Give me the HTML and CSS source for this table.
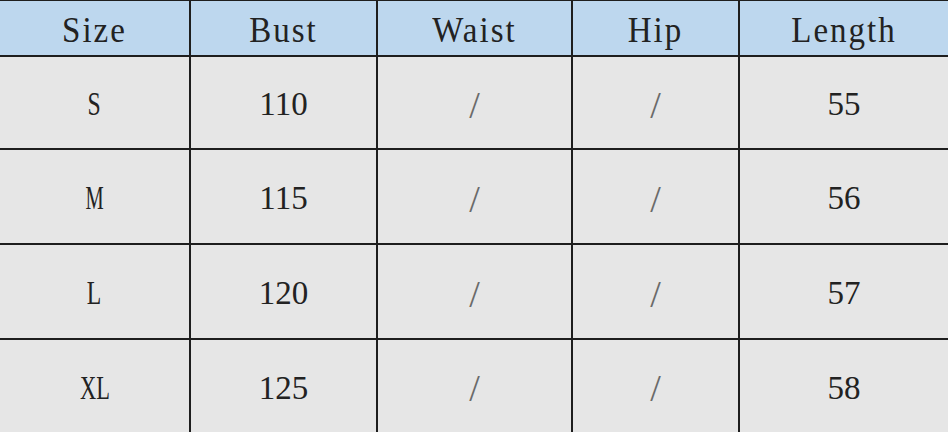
FILE: index.html
```html
<!DOCTYPE html>
<html>
<head>
<meta charset="utf-8">
<link rel="stylesheet" href="styles.css">
</head>
<body>
<div class="chart">
  <div class="cell head"><span class="t">Size</span></div>
  <div class="cell head"><span class="t">Bust</span></div>
  <div class="cell head"><span class="t">Waist</span></div>
  <div class="cell head"><span class="t">Hip</span></div>
  <div class="cell head"><span class="t">Length</span></div>

  <div class="cell"><span class="t narrow">S</span></div>
  <div class="cell"><span class="t">110</span></div>
  <div class="cell"><span class="t slash">/</span></div>
  <div class="cell"><span class="t slash">/</span></div>
  <div class="cell"><span class="t">55</span></div>

  <div class="cell"><span class="t narrow m">M</span></div>
  <div class="cell"><span class="t">115</span></div>
  <div class="cell"><span class="t slash">/</span></div>
  <div class="cell"><span class="t slash">/</span></div>
  <div class="cell"><span class="t">56</span></div>

  <div class="cell"><span class="t narrow">L</span></div>
  <div class="cell"><span class="t">120</span></div>
  <div class="cell"><span class="t slash">/</span></div>
  <div class="cell"><span class="t slash">/</span></div>
  <div class="cell"><span class="t">57</span></div>

  <div class="cell"><span class="t narrow xl">XL</span></div>
  <div class="cell"><span class="t">125</span></div>
  <div class="cell"><span class="t slash">/</span></div>
  <div class="cell"><span class="t slash">/</span></div>
  <div class="cell"><span class="t">58</span></div>
</div>
</body>
</html>
```
FILE: styles.css
```css
html, body {
  margin: 0;
  padding: 0;
  background: #e6e6e6;
}
.chart {
  width: 948px;
  height: 432px;
  box-sizing: border-box;
  padding-top: 1px;
  background: #1e1e1e;
  display: grid;
  grid-template-columns: 189px 185px 193px 165px 208px;
  grid-template-rows: 54px 91px 93px 93px 92px;
  gap: 2px;
}
.cell {
  background: #e6e6e6;
  display: flex;
  align-items: center;
  justify-content: center;
  font-family: "Liberation Serif", serif;
  font-size: 33px;
  line-height: 1;
  color: #222222;
  padding-top: 4px;
}
.head {
  background: #bdd7ee;
  letter-spacing: 2px;
}
.head .t {
  transform: scaleY(1.08);
}
.t {
  display: inline-block;
}
.narrow {
  transform: scaleX(0.72);
}
.narrow.m {
  transform: scaleX(0.62);
}
.narrow.xl {
  transform: scaleX(0.68);
}
.slash {
  color: #6a6a6a;
  font-size: 38px;
}
```
